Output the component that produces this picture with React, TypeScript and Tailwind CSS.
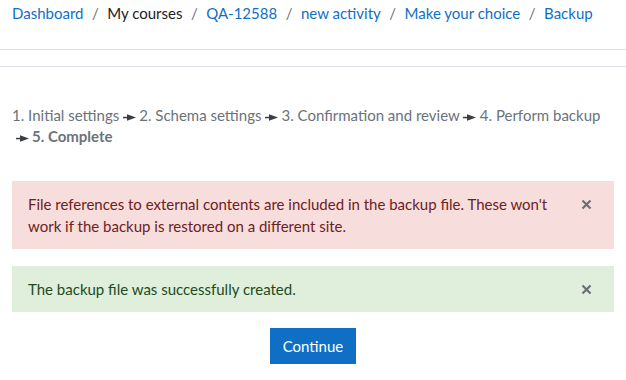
import React from 'react';

const crumbs = [
  { label: 'Dashboard', link: true },
  { label: 'My courses', link: false },
  { label: 'QA-12588', link: true },
  { label: 'new activity', link: true },
  { label: 'Make your choice', link: true },
  { label: 'Backup', link: true },
];

const Arrow: React.FC = () => (
  <svg width="13" height="7" viewBox="0 0 13 7" className="inline-block mx-[3.5px] align-middle">
    <rect x="0" y="2.8" width="5" height="1.5" fill="#3a3f44" />
    <polygon points="4,0.3 13,3.5 4,6.7" fill="#3a3f44" />
  </svg>
);

const Close: React.FC = () => (
  <svg width="11" height="11" viewBox="0 0 11 11" className="shrink-0">
    <path d="M1.5 1.5 L9.5 9.5 M9.5 1.5 L1.5 9.5" stroke="#6b6f74" strokeWidth="2.2" />
  </svg>
);

export default function App() {
  return (
    <div className="w-[626px] h-[380px] bg-white text-[15px] overflow-hidden" style={{ fontFamily: 'Lato, "Noto Sans", sans-serif' }}>
      <div className="flex items-center h-[26px] pl-[12px] text-[#1d2125]">
        {crumbs.map((c, i) => (
          <React.Fragment key={c.label}>
            {i > 0 && <span className="px-[8.5px] text-[#6a737b]">/</span>}
            <span className={c.link ? 'text-[#0f6fc5]' : 'text-[#1d2125]'}>{c.label}</span>
          </React.Fragment>
        ))}
      </div>
      <div className="mt-[23px] border-t border-[#dee2e6] h-[17px]" />
      <div className="border-t border-[#dee2e6]" />

      <div className="px-[12px] pt-[38px] text-[#6a737b] leading-[21px]">
        1. Initial settings<Arrow />2. Schema settings<Arrow />3. Confirmation and review<Arrow />4. Perform backup
        <br />
        <Arrow />
        <span className="font-bold">5. Complete</span>
      </div>

      <div className="mx-[12px] mt-[34px] bg-[#f7dddc] text-[#6e211e] pl-[16px] pr-[22px] py-[12px] flex items-start gap-[20px] leading-[22px]">
        <div className="flex-1">
          File references to external contents are included in the backup file. These won't work if the backup is restored on a different site.
        </div>
        <div className="pt-[6px]"><Close /></div>
      </div>

      <div className="mx-[12px] mt-[17px] bg-[#dfefdc] text-[#1c4b1c] pl-[16px] pr-[22px] py-[12px] flex items-start gap-[20px] leading-[22px]">
        <div className="flex-1">The backup file was successfully created.</div>
        <div className="pt-[6px]"><Close /></div>
      </div>

      <div className="flex justify-center mt-[16px]">
        <button className="bg-[#0f6fc5] text-white px-[13px] h-[36px] leading-[36px]">Continue</button>
      </div>
    </div>
  );
}
